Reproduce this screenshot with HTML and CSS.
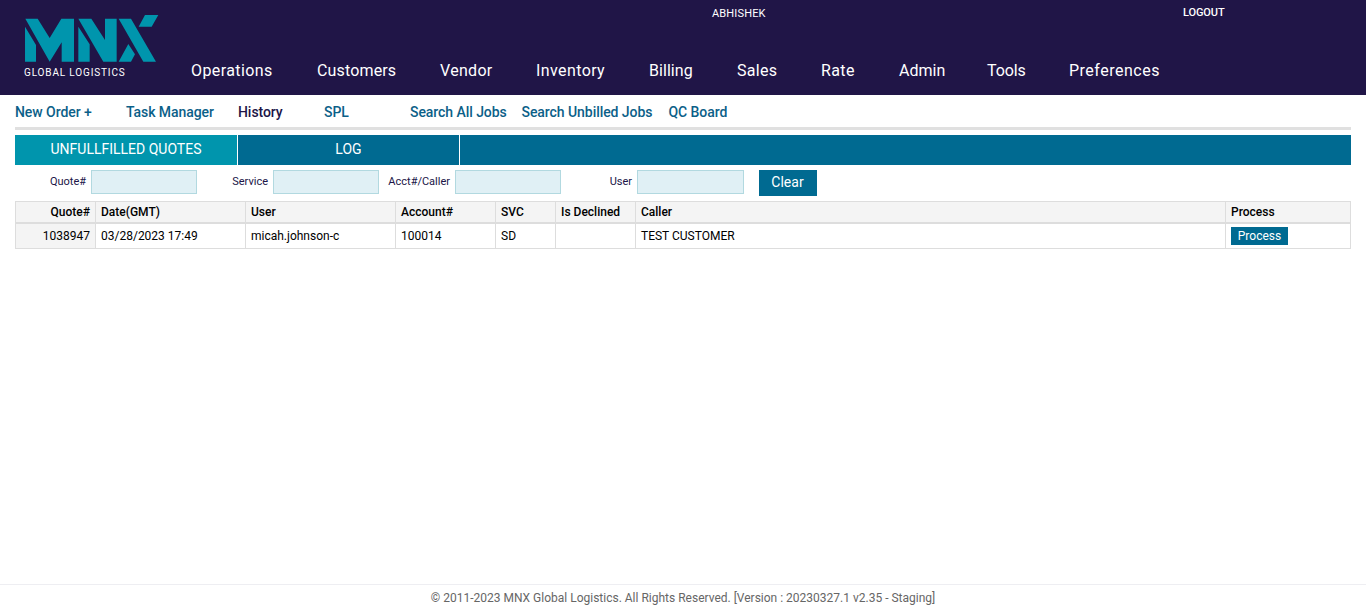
FILE: index.html
```html
<!DOCTYPE html>
<html lang="en">
<head>
<meta charset="utf-8">
<title>MNX Global Logistics</title>
<link rel="stylesheet" href="styles.css">
</head>
<body>
<header class="header">
  <div class="logo">
    <svg class="logo-mark" viewBox="72 42 408 146" role="img" aria-label="MNX">
      <path d="M75 80L108 135V185H75Z M76 56H113L149 114L184 56H222V185H185V127L149 185Z M235 80L269 133V185H235Z M235 56H274L315 120V56H350V185H310Z M356 56H393L468 185H430Z M435 45H475L455 80H416Z M385 132L405 163L393 185H356Z"/>
    </svg>
    <div class="tagline">GLOBAL LOGISTICS</div>
  </div>
  <div class="header-main">
    <div class="account"><span class="username">ABHISHEK</span><a class="logout">LOGOUT</a></div>
    <nav class="nav">
      <a class="n-operations">Operations</a><a class="n-customers">Customers</a><a class="n-vendor">Vendor</a><a class="n-inventory">Inventory</a><a class="n-billing">Billing</a><a class="n-sales">Sales</a><a class="n-rate">Rate</a><a class="n-admin">Admin</a><a class="n-tools">Tools</a><a class="n-preferences">Preferences</a>
    </nav>
  </div>
</header>
<main class="content">
  <nav class="subnav"><a>New Order +</a><a>Task Manager</a><a class="current">History</a><a>SPL</a><a>Search All Jobs</a><a>Search Unbilled Jobs</a><a>QC Board</a></nav>
  <div class="tabs"><a class="tab active">UNFULLFILLED QUOTES</a><a class="tab">LOG</a></div>
  <form class="filters">
    <label for="quote">Quote#</label><input id="quote">
    <label for="service">Service</label><input id="service">
    <label for="caller">Acct#/Caller</label><input id="caller">
    <label for="user">User</label><input id="user">
    <button class="clear" type="button">Clear</button>
  </form>
  <table class="quotes">
    <colgroup><col class="c-quote"><col class="c-date"><col class="c-user"><col class="c-account"><col class="c-svc"><col class="c-declined"><col class="c-caller"><col class="c-process"></colgroup>
    <thead><tr><th>Quote#</th><th>Date(GMT)</th><th>User</th><th>Account#</th><th>SVC</th><th>Is Declined</th><th>Caller</th><th>Process</th></tr></thead>
    <tbody><tr><td>1038947</td><td>03/28/2023 17:49</td><td>micah.johnson-c</td><td>100014</td><td>SD</td><td></td><td>TEST CUSTOMER</td><td><button class="process" type="button">Process</button></td></tr></tbody>
  </table>
</main>
<footer class="footer"><span>© 2011-2023 MNX Global Logistics. All Rights Reserved. [Version : 20230327.1 v2.35 - Staging]</span></footer>
</body>
</html>
```
FILE: styles.css
```css
* { box-sizing: border-box; }
body { margin: 0; height: 612px; display: flex; flex-direction: column; overflow: hidden; background: #fff; color: #000; font-family: Roboto, "Liberation Sans", sans-serif; font-size: 12px; }
.header { height: 95px; flex: none; display: flex; background: #201547; color: #fff; }
.logo { width: 191px; padding: 14px 0 0 24px; }
.logo-mark { display: block; width: 136px; height: 48.67px; fill: #0095ad; }
.tagline { margin-top: 4px; font-size: 10px; line-height: 12px; letter-spacing: .85px; white-space: nowrap; }
.header-main { flex: 1; }
.account { display: flex; height: 50px; padding-top: 6px; font-size: 11px; line-height: 14px; }
.username { width: 471px; margin-left: 521px; padding-top: 1px; letter-spacing: .15px; }
.logout { font-weight: 500; letter-spacing: -.1px; }
.nav { display: flex; font-size: 16px; line-height: 42px; white-space: nowrap; letter-spacing: .4px; }
.n-operations { width: 126px; }
.n-customers { width: 123px; letter-spacing: .15px; }
.n-vendor { width: 96px; letter-spacing: .3px; }
.n-inventory { width: 113px; letter-spacing: .4px; }
.n-billing { width: 88px; letter-spacing: .05px; }
.n-sales { width: 84px; letter-spacing: .3px; }
.n-rate { width: 78px; letter-spacing: .4px; }
.n-admin { width: 88px; letter-spacing: 0; }
.n-tools { width: 82px; letter-spacing: -.1px; }
.n-preferences { letter-spacing: .5px; }
.content { flex: 1; padding: 0 15px; }
.subnav { display: grid; grid-template-columns: 111px 112px 86px 86px 111.5px 147px 1fr; height: 35px; border-bottom: 3px solid #e0e0e0; color: #0b6088; font-size: 14px; font-weight: 500; line-height: 34px; letter-spacing: -.06px; white-space: nowrap; }
.current { color: #201547; }
.tabs { display: flex; height: 30px; margin-top: 5px; background: #006a91; }
.tab { width: 222px; border-right: 1px solid #fff; color: #fff; text-align: center; font-size: 14px; line-height: 29px; }
.tab.active { width: 223px; background: #0095ad; }
.filters { display: grid; grid-template-columns: 71px 106px 66px 106px 66px 106px 66px 107px 68px; column-gap: 5px; height: 36px; padding-top: 5px; color: #201547; font-size: 11px; line-height: 23px; }
.filters label { text-align: right; white-space: nowrap; }
.filters input { width: 100%; height: 24px; border: 1px solid #b2d9e0; background: #e0f0f5; }
.clear { width: 58px; height: 26px; margin-left: 10px; padding: 0 1px 2px 0; border: 0; background: #006a91; color: #fff; font: 14px Roboto, sans-serif; }
.quotes { width: 1336px; table-layout: fixed; border-collapse: separate; border-spacing: 0; border-top: 1px solid #ddd; border-left: 1px solid #ddd; }
.quotes th, .quotes td { padding: 0 5px; border-right: 1px solid #ddd; text-align: left; white-space: nowrap; }
.quotes th { height: 22px; border-bottom: 2px solid #ddd; background: #f4f4f4; font-weight: 500; }
.quotes td { height: 25px; border-bottom: 1px solid #ddd; }
.quotes th:first-child, .quotes td:first-child { background: #f4f4f4; text-align: right; }
.c-quote { width: 80px; }
.c-date, .c-user { width: 150px; }
.c-account { width: 100px; }
.c-svc { width: 60px; }
.c-declined { width: 80px; }
.c-caller { width: 590px; }
.process { display: block; width: 57px; height: 18px; padding: 0; border: 0; background: #006a91; color: #fff; font: 12px Roboto, sans-serif; }
.footer { height: 28px; flex: none; border-top: 1px solid #eeeef2; text-align: center; color: #666; line-height: 26px; }
```
